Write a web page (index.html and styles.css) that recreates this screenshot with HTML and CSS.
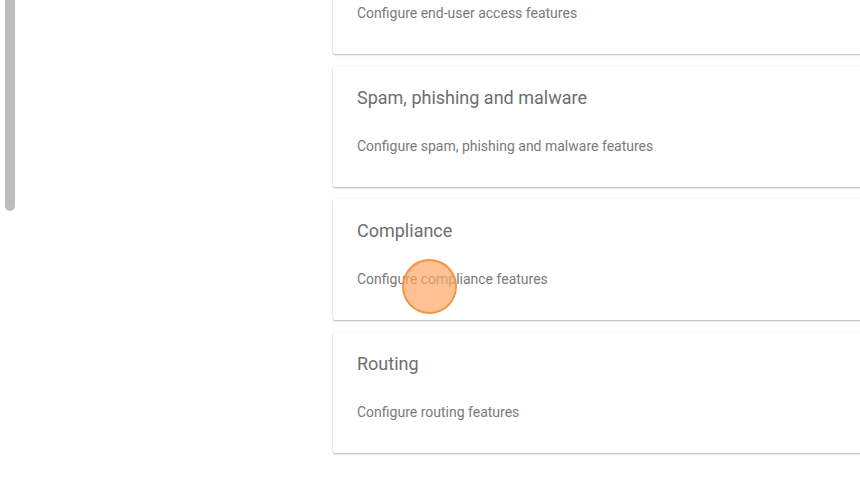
FILE: index.html
```html
<!DOCTYPE html>
<html>
<head>
<meta charset="utf-8">
<link rel="stylesheet" href="styles.css">
</head>
<body>
<div class="page">
  <div class="sidebar">
    <div class="scrollbar"></div>
  </div>
  <div class="content">
    <div class="card">
      <div class="card-title">End-user access</div>
      <div class="card-sub">Configure end-user access features</div>
    </div>
    <div class="card">
      <div class="card-title">Spam, phishing and malware</div>
      <div class="card-sub">Configure spam, phishing and malware features</div>
    </div>
    <div class="card">
      <div class="card-title">Compliance</div>
      <div class="card-sub">Configure compliance features</div>
    </div>
    <div class="card">
      <div class="card-title">Routing</div>
      <div class="card-sub">Configure routing features</div>
    </div>
  </div>
</div>
<div class="click-marker"></div>
</body>
</html>
```
FILE: styles.css
```css
html, body {
  margin: 0;
  padding: 0;
  width: 860px;
  height: 481px;
  overflow: hidden;
  background: #ffffff;
  font-family: Roboto, "Liberation Sans", sans-serif;
}
.page {
  display: flex;
  align-items: flex-start;
  height: 481px;
}
.sidebar {
  width: 333px;
  flex: 0 0 333px;
  padding-left: 5px;
  box-sizing: border-box;
}
.scrollbar {
  width: 10px;
  height: 211px;
  background: #bdbdbd;
  border-radius: 0 0 5px 5px;
}
.content {
  flex: 0 0 600px;
  display: flex;
  flex-direction: column;
  gap: 12px;
  margin-top: -67px;
}
.card {
  height: 121px;
  box-sizing: border-box;
  background: #fff;
  padding: 21px 24px 0 24px;
  border-radius: 2px;
  box-shadow: 0 1px 2px rgba(0,0,0,0.28), 0 0 2px rgba(0,0,0,0.06);
}
.card-title {
  font-size: 18px;
  line-height: 22px;
  color: #6e6e6e;
}
.card-sub {
  margin-top: 28px;
  font-size: 14px;
  line-height: 18px;
  color: #7a7a7a;
}
.click-marker {
  position: absolute;
  left: 402px;
  top: 259px;
  width: 51px;
  height: 51px;
  border-radius: 50%;
  background: rgba(252, 167, 102, 0.7);
  border: 2px solid rgba(240, 146, 62, 0.9);
}
```
